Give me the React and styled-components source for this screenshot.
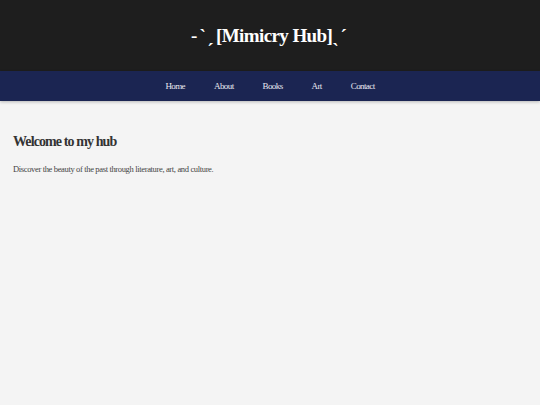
import React from 'react'
import styled, { createGlobalStyle } from 'styled-components'

const GlobalStyle = createGlobalStyle`
  html, body {
    margin: 0;
    padding: 0;
    background: #f4f4f4;
    font-family: "Liberation Serif", "Times New Roman", serif;
  }
`

const links = ['Home', 'About', 'Books', 'Art', 'Contact']

export default function App() {
  return (
    <>
      <GlobalStyle />
      <Header>
        <Title>
          <Flourish>-ˋˏ</Flourish>[Mimicry Hub]<Flourish>ˎˊ</Flourish>
        </Title>
      </Header>
      <Nav>
        {links.map(link => (
          <NavLink key={link} href='#'>
            {link}
          </NavLink>
        ))}
      </Nav>
      <Main>
        <Heading>Welcome to my hub</Heading>
        <Text>Discover the beauty of the past through literature, art, and culture.</Text>
      </Main>
    </>
  )
}

const Header = styled.header`
  background: #1e1e1e;
  height: 71px;
  display: flex;
  align-items: center;
  justify-content: center;
`

const Title = styled.h1`
  margin: 0;
  color: #ffffff;
  font-size: 19px;
  font-weight: bold;
  letter-spacing: -0.6px;
`

const Flourish = styled.span`
  letter-spacing: 2px;
`

const Nav = styled.nav`
  background: #1b2552;
  height: 30px;
  display: flex;
  align-items: center;
  justify-content: center;
  gap: 29px;
  box-shadow: 0 1px 3px rgba(0, 0, 0, 0.25);
`

const NavLink = styled.a`
  color: #e8e8f0;
  text-decoration: none;
  font-size: 9px;
  letter-spacing: -0.6px;
`

const Main = styled.main`
  padding: 33px 13px;
`

const Heading = styled.h2`
  margin: 0 0 14px;
  color: #333;
  font-size: 14px;
  letter-spacing: -0.9px;
`

const Text = styled.p`
  margin: 0;
  color: #444;
  font-size: 8.5px;
  letter-spacing: -0.35px;
`
